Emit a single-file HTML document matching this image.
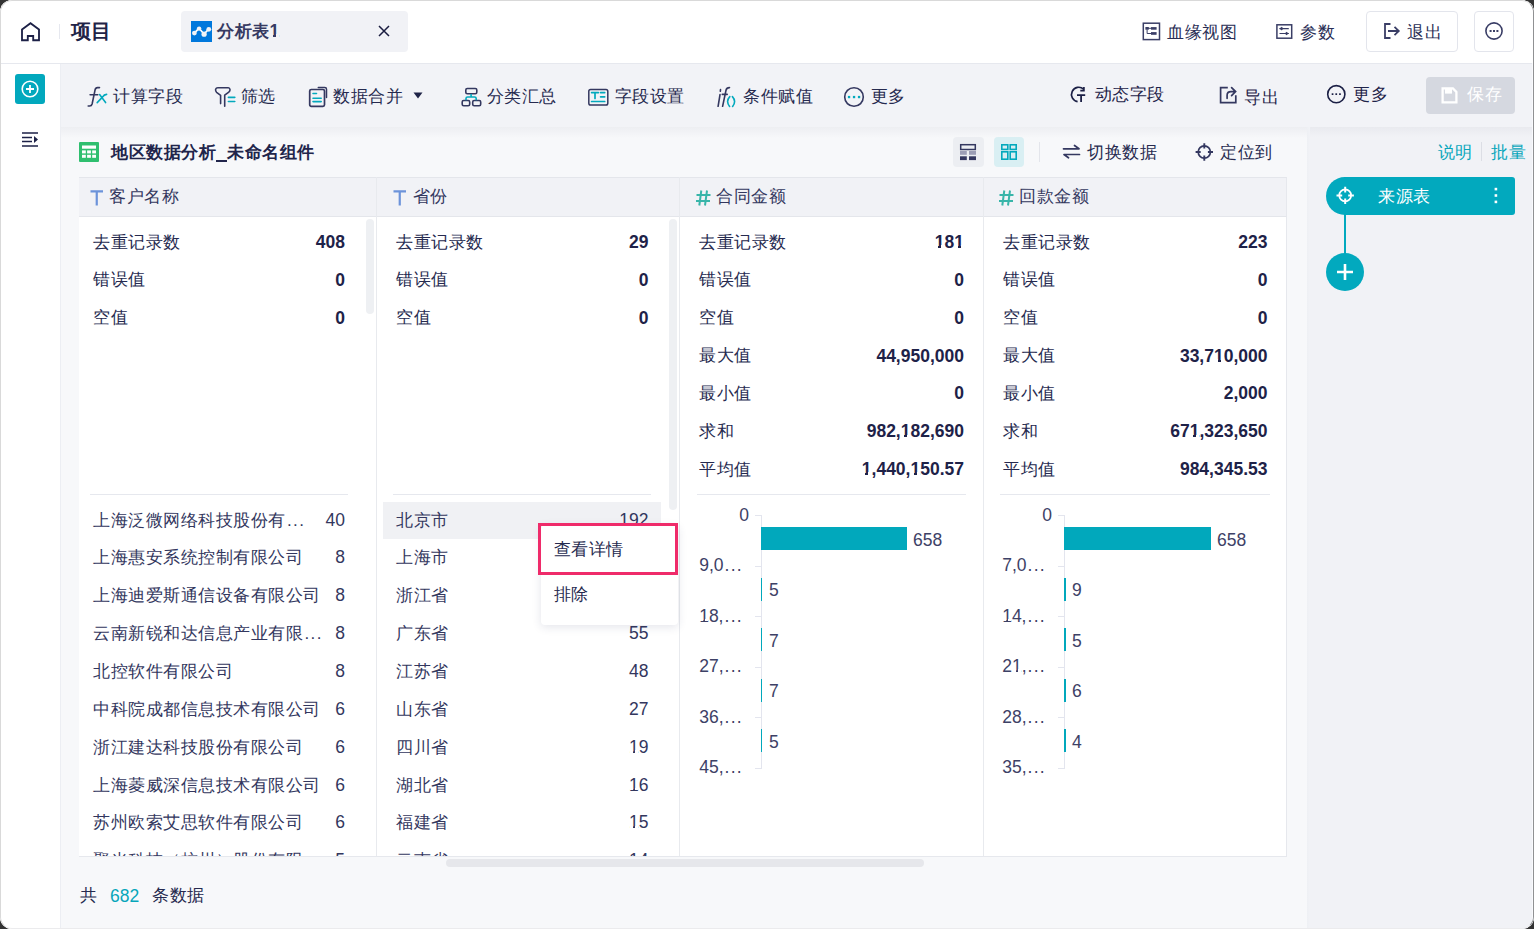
<!DOCTYPE html>
<html><head><meta charset="utf-8">
<style>
*{box-sizing:border-box;margin:0;padding:0}
html,body{width:1534px;height:929px;overflow:hidden;background:#333}
body{font-family:"Liberation Sans",sans-serif;font-size:17px;letter-spacing:.5px;color:#262a4f;position:relative}
.n{font-size:17.5px;letter-spacing:0}
.one{position:relative}
.one::before,.one::after{content:"";position:absolute;top:13.4px;height:2.6px;background:#fff}
.one::before{left:.5px;width:3.2px}
.one::after{left:6px;width:3.2px}
.b .one::after{left:6.6px}
.sm .one::before,.sm .one::after{top:12.9px}
.tab .one::before,.tab .one::after{background:#f1f2f6}
.win{position:absolute;left:0;top:0;width:1534px;height:929px;border-radius:12px;overflow:hidden;background:#fff}
.frame{position:absolute;left:0;top:0;width:1534px;height:929px;border-radius:12px;
 border-left:1px solid #d9d9d9;border-top:1px solid #d9d9d9;border-right:1px solid #909193;border-bottom:1px solid #ebebed}
.a{position:absolute}
.t{position:absolute;white-space:nowrap;line-height:20px}
.b{font-weight:bold}
.r{text-align:right}
svg{position:absolute;overflow:visible}
</style></head><body>
<div class="win">
 <!-- header -->
 <div class="a" style="left:0;top:0;width:1534px;height:64px;background:#fff;border-bottom:1px solid #e6e8ee"></div>
 <svg style="left:21px;top:22px" width="20" height="20" viewBox="0 0 20 20"><path d="M1 7.5 L9.5 1.2 L18 7.5 V18.2 H12.2 V14 H6.8 V18.2 H1 Z" fill="none" stroke="#1d2147" stroke-width="1.85" stroke-linejoin="miter"/></svg>
 <div class="a" style="left:59px;top:24px;width:1px;height:15px;background:#e6e8ef"></div>
 <div class="t b" style="left:71px;top:21px;font-size:20px;letter-spacing:-.5px;color:#1f2347">项目</div>
 <div class="a" style="left:181px;top:11px;width:227px;height:41px;background:#f1f2f6;border-radius:4px"></div>
 <div class="a" style="left:191px;top:21px;width:21px;height:21px;background:#0078dc"></div>
 <svg style="left:191px;top:21px" width="21" height="21" viewBox="0 0 21 21"><path d="M3.3 12.1 L8 7.3 L13 13 L17.7 8.2" fill="none" stroke="#fff" stroke-width="1.7"/><g fill="#f1f3f6"><circle cx="3.4" cy="12.1" r="2.4"/><circle cx="8.1" cy="7.6" r="2.2"/><circle cx="13.1" cy="13.2" r="2.6"/><circle cx="17.8" cy="8.3" r="2.4"/></g></svg>
 <div class="t b tab" style="left:217px;top:21px;color:#363a62">分析表<span class="n one">1</span></div>
 <svg style="left:378px;top:25px" width="12" height="12" viewBox="0 0 12 12"><path d="M1 1 L11 11 M11 1 L1 11" stroke="#1a1d40" stroke-width="1.5"/></svg>

 <svg style="left:1142px;top:22px" width="18" height="18" viewBox="0 0 18 18"><rect x="1.3" y="1.2" width="16.2" height="16.4" fill="none" stroke="#3a3e66" stroke-width="1.5"/><g fill="#3a3e66"><rect x="3.4" y="5" width="3.4" height="2.7"/><rect x="9" y="5.1" width="5.6" height="2.6"/><rect x="9" y="10.1" width="5.6" height="2.7"/></g><path d="M6 6.3 H9 M5.1 7.5 V11.5 H9" fill="none" stroke="#3a3e66" stroke-width="1"/></svg>
 <div class="t" style="left:1167px;top:23px;color:#2a2e55">血缘视图</div>
 <svg style="left:1276px;top:24px" width="16" height="15" viewBox="0 0 16 15"><rect x="0.9" y="0.8" width="14.8" height="13.4" fill="none" stroke="#3a3e66" stroke-width="1.5"/><path d="M3.5 4.6 H12.8 M3.5 9.5 H12.8" stroke="#3a3e66" stroke-width="1.1"/><path d="M3.3 4.6 L5.9 2.8 L7.2 4.6 L5.9 6.4 Z M12.9 9.5 L10.3 7.7 L9 9.5 L10.3 11.3 Z" fill="#3a3e66"/></svg>
 <div class="t" style="left:1300px;top:23px;color:#2a2e55">参数</div>
 <div class="a" style="left:1366px;top:11px;width:92px;height:41px;border:1px solid #e3e5ec;border-radius:4px;background:#fff"></div>
 <svg style="left:1384px;top:23px" width="16" height="16" viewBox="0 0 16 16"><path d="M6.5 1 H1 V15 H6.5" fill="none" stroke="#3a3e66" stroke-width="1.8"/><path d="M4 8 H14.5 M10.5 3.8 L14.8 8 L10.5 12.2" fill="none" stroke="#3a3e66" stroke-width="1.8"/></svg>
 <div class="t" style="left:1407px;top:23px;color:#2a2e55">退出</div>
 <div class="a" style="left:1474px;top:11px;width:40px;height:41px;border:1px solid #e3e5ec;border-radius:4px;background:#fff"></div>
 <svg style="left:1485px;top:22px" width="18" height="18" viewBox="0 0 18 18"><circle cx="9" cy="9" r="8.1" fill="none" stroke="#3a3e66" stroke-width="1.6"/><rect x="4.6" y="8" width="2" height="2" fill="#3a3e66"/><rect x="8" y="8" width="2" height="2" fill="#3a3e66"/><rect x="11.4" y="8" width="2" height="2" fill="#3a3e66"/></svg>

 <!-- sidebar -->
 <div class="a" style="left:0;top:64px;width:61px;height:865px;background:#fff;border-right:1px solid #eceef3"></div>
 <div class="a" style="left:15px;top:74px;width:30px;height:30px;background:#02a8bd;border-radius:3px"></div>
 <svg style="left:15px;top:74px" width="30" height="30" viewBox="0 0 30 30"><circle cx="15" cy="15" r="7.8" fill="none" stroke="#fff" stroke-width="1.6"/><path d="M15 11 V19 M11 15 H19" stroke="#fff" stroke-width="1.8"/></svg>
 <svg style="left:22px;top:132px" width="16" height="15" viewBox="0 0 16 15"><path d="M0 1 H16 M0 5.5 H10 M0 9.5 H10 M0 14 H16" stroke="#1d2147" stroke-width="1.6"/><path d="M12 4 L16 7.5 L12 11 Z" fill="#1d2147"/></svg>

 <!-- toolbar -->
 <div class="a" style="left:61px;top:64px;width:1473px;height:63px;background:#f2f3f7"></div>
 <!-- content bg -->
 <div class="a" style="left:61px;top:127px;width:1246px;height:802px;background:#f7f8fa"></div>
 <div class="a" style="left:61px;top:127px;width:1246px;height:11px;background:linear-gradient(#edeef2,#f7f8fa)"></div>
 <!-- right panel -->
 <div class="a" style="left:1307px;top:127px;width:227px;height:802px;background:#f1f2f6"></div>
 <div class="a" style="left:1307px;top:127px;width:227px;height:10px;background:linear-gradient(#e9eaef,#f1f2f6)"></div>
 <div class="a" style="left:1307px;top:127px;width:3px;height:802px;background:linear-gradient(90deg,#eef0f4,#f1f2f6)"></div>


 <!-- toolbar items -->
 <svg style="left:84px;top:82px" width="28" height="28" viewBox="0 0 28 28"><path d="M15.5 5.6 H13.5 Q11.6 5.6 11.1 7.8 L8.1 22 Q7.6 24 5.6 24 H4.2 M6.1 12.8 H13.8" fill="none" stroke="#343860" stroke-width="1.6" stroke-linecap="round"/><path d="M15.6 12.6 L21.6 20.6 M22.6 12.4 Q20.2 12.4 18.2 15.4 L13.2 20.6" fill="none" stroke="#03a9bd" stroke-width="1.6" stroke-linecap="round"/></svg>
 <div class="t" style="left:113px;top:87px">计算字段</div>
 <svg style="left:210px;top:82px" width="28" height="28" viewBox="0 0 28 28"><path d="M10.6 21.6 V13.3 L6.6 10.3 Q5.4 9.3 5.6 7.3 Q6.2 5.7 7.8 5.7 H18.3 Q19.8 5.7 20 7.5 Q20.2 9.1 18.8 10.1 L14.7 13.2 V24.2" fill="none" stroke="#343860" stroke-width="1.6" stroke-linecap="round" stroke-linejoin="round"/><path d="M18.4 15.4 H24.8 M18.4 19.5 H24.8" stroke="#03a9bd" stroke-width="1.6" stroke-linecap="round"/></svg>
 <div class="t" style="left:240.5px;top:87px">筛选</div>
 <svg style="left:305px;top:82px" width="28" height="28" viewBox="0 0 28 28"><rect x="4.7" y="7.5" width="14.8" height="16.8" rx="1.6" fill="none" stroke="#343860" stroke-width="1.7"/><path d="M13.3 5.5 H19.8 Q21.5 5.5 21.5 7.2 V15.5" fill="none" stroke="#343860" stroke-width="1.5" stroke-linecap="round"/><path d="M8 11.5 H11.5 M8 16.3 H16.2 M8 19.6 H16.2" stroke="#03a9bd" stroke-width="1.6" stroke-linecap="round"/></svg>
 <div class="t" style="left:333px;top:87px">数据合并</div>
 <svg style="left:413px;top:92px" width="10" height="7" viewBox="0 0 10 7"><path d="M0.5 0.5 H9.5 L5 6.5 Z" fill="#1f2347"/></svg>
 <svg style="left:457px;top:82px" width="28" height="28" viewBox="0 0 28 28"><rect x="8.8" y="6.5" width="11" height="5.2" rx="1.5" fill="none" stroke="#343860" stroke-width="1.6"/><rect x="5.2" y="18.5" width="7.5" height="5.2" rx="1.5" fill="none" stroke="#343860" stroke-width="1.6"/><rect x="15.7" y="18.5" width="8" height="5.2" rx="1.5" fill="none" stroke="#343860" stroke-width="1.6"/><path d="M14.1 12 V15 M9 18.3 V16.6 Q9 15 10.6 15 H17.6 Q19.2 15 19.2 16.6 V18.3" fill="none" stroke="#03a9bd" stroke-width="1.6"/></svg>
 <div class="t" style="left:486.5px;top:87px">分类汇总</div>
 <svg style="left:584px;top:82px" width="28" height="28" viewBox="0 0 28 28"><rect x="4.8" y="7.4" width="19" height="15.6" rx="1.8" fill="none" stroke="#343860" stroke-width="1.5"/><path d="M7.6 10.6 H14.4 M11 10.6 V16.4 M16.6 10.6 H20.7 M16.6 14.8 H20.7 M7.6 19.5 H20.7" fill="none" stroke="#03a9bd" stroke-width="1.7" stroke-linecap="round"/></svg>
 <div class="t" style="left:614.5px;top:87px">字段设置</div>
 <svg style="left:712px;top:82px" width="28" height="28" viewBox="0 0 28 28"><path d="M8.5 7.6 L8.3 9.3 M8 12.6 L6.1 24.3 M17.5 5.6 Q14.6 5.6 14 8.2 L10.6 24.3 M10.3 12.4 H15.2" fill="none" stroke="#343860" stroke-width="1.6" stroke-linecap="round"/><path d="M17.8 14.6 Q15.6 17 15.6 19.5 Q15.6 22 17.6 24.4 M20.4 14.6 Q22.6 17 22.6 19.5 Q22.6 22 20.6 24.4" fill="none" stroke="#03a9bd" stroke-width="1.6" stroke-linecap="round"/></svg>
 <div class="t" style="left:743px;top:87px">条件赋值</div>
 <svg style="left:840px;top:82px" width="28" height="28" viewBox="0 0 28 28"><circle cx="14" cy="15" r="9.3" fill="none" stroke="#343860" stroke-width="1.6"/><rect x="7.9" y="13.9" width="2.3" height="2.3" fill="#03a9bd"/><rect x="12.9" y="13.9" width="2.3" height="2.3" fill="#03a9bd"/><rect x="17.9" y="13.9" width="2.3" height="2.3" fill="#03a9bd"/></svg>
 <div class="t" style="left:870.5px;top:87px">更多</div>

 <svg style="left:1064px;top:80px" width="28" height="28" viewBox="0 0 28 28"><path d="M13.6 21.6 A7.2 7.2 0 1 1 19.6 9.2" fill="none" stroke="#1b1f45" stroke-width="1.7"/><path d="M16.3 10.6 H19.9 V7" fill="none" stroke="#1b1f45" stroke-width="1.7"/><path d="M13 15.1 H21.2 M17.1 15.1 V22" fill="none" stroke="#1b1f45" stroke-width="1.8"/></svg>
 <div class="t" style="left:1094.5px;top:85px;color:#1f2349">动态字段</div>
 <svg style="left:1214px;top:80px" width="28" height="28" viewBox="0 0 28 28"><path d="M13.8 7.7 H6.6 V22.6 H21.8 V15.3" fill="none" stroke="#343860" stroke-width="1.7"/><path d="M13.1 18.3 V15.2 Q13.1 11.6 17 11.6 H21 M17.6 7.6 L21.6 11.6 L17.6 15.6" fill="none" stroke="#343860" stroke-width="1.7" stroke-linecap="round"/></svg>
 <div class="t" style="left:1244px;top:87.5px;color:#1f2349">导出</div>
 <svg style="left:1322px;top:80px" width="28" height="28" viewBox="0 0 28 28"><circle cx="14.3" cy="14.2" r="8.6" fill="none" stroke="#1b1f45" stroke-width="1.6"/><rect x="9.7" y="13.3" width="1.7" height="1.7" fill="#1b1f45"/><rect x="13.4" y="13.3" width="1.7" height="1.7" fill="#1b1f45"/><rect x="17.1" y="13.3" width="1.7" height="1.7" fill="#1b1f45"/></svg>
 <div class="t" style="left:1353px;top:85px;color:#1f2349">更多</div>
 <div class="a" style="left:1426px;top:77px;width:89px;height:37px;background:#d5d8e0;border-radius:4px"></div>
 <svg style="left:1432px;top:80px" width="30" height="30" viewBox="0 0 30 30"><path d="M10.6 8.4 H20.9 L24.4 12 V22.4 H10.6 Z" fill="none" stroke="#fff" stroke-width="2.3"/><rect x="13" y="9" width="7" height="4.6" fill="#fff"/></svg>
 <div class="t" style="left:1467px;top:85px;color:#fff">保存</div>

 <div id="content">
 <div class="a" style="left:79px;top:142px;width:20px;height:20px;background:#2fbf6f;border-radius:1px"></div>
 <svg style="left:79px;top:142px" width="20" height="20" viewBox="0 0 20 20"><rect x="3" y="3.5" width="14" height="3.2" fill="#fff"/><g fill="#fff"><rect x="3" y="8.4" width="3.8" height="3"/><rect x="8.1" y="8.4" width="3.8" height="3"/><rect x="13.2" y="8.4" width="3.8" height="3"/><rect x="3" y="12.8" width="3.8" height="3"/><rect x="8.1" y="12.8" width="3.8" height="3"/><rect x="13.2" y="12.8" width="3.8" height="3"/></g></svg>
 <div class="t b" style="left:111px;top:143px;color:#21254b">地区数据分析<span style="display:inline-block;width:11px;height:20px;position:relative;vertical-align:top"><i style="position:absolute;left:-0.5px;top:17px;width:11px;height:2px;background:#21254b"></i></span>未命名组件</div>
 <div class="a" style="left:953px;top:137px;width:31px;height:30px;background:#eceef2;border-radius:4px"></div>
 <svg style="left:953px;top:137px" width="31" height="30" viewBox="0 0 31 30"><rect x="7.7" y="7.7" width="14.6" height="4.8" fill="none" stroke="#343860" stroke-width="1.5"/><rect x="7" y="14" width="6.8" height="3.8" fill="#9c9eb6"/><rect x="16" y="14" width="7" height="3.8" fill="#9c9eb6"/><rect x="7" y="19.3" width="6.8" height="3.8" fill="#343860"/><rect x="16" y="19.3" width="7" height="3.8" fill="#343860"/></svg>
 <div class="a" style="left:994px;top:137px;width:30px;height:30px;background:#d9eff3;border-radius:4px"></div>
 <svg style="left:994px;top:137px" width="30" height="30" viewBox="0 0 30 30"><g fill="none" stroke="#03a9bd" stroke-width="1.6"><rect x="7.8" y="7.8" width="6" height="4.6"/><rect x="16.2" y="7.8" width="6" height="4.6"/><rect x="7.8" y="14.8" width="6" height="7.4"/><rect x="16.2" y="14.8" width="6" height="7.4"/></g></svg>
 <div class="a" style="left:1039px;top:142px;width:1px;height:20px;background:#e3e5eb"></div>
 <svg style="left:1060px;top:140px" width="24" height="24" viewBox="0 0 24 24"><path d="M3.5 8.8 H19 L14.5 5.5 M19.5 14.5 H4 L8.5 17.8" fill="none" stroke="#343860" stroke-width="1.7" stroke-linecap="round" stroke-linejoin="round"/></svg>
 <div class="t" style="left:1087px;top:143px">切换数据</div>
 <svg style="left:1192px;top:140px" width="24" height="24" viewBox="0 0 24 24"><circle cx="12.3" cy="12" r="6.1" fill="none" stroke="#343860" stroke-width="1.7"/><path d="M12.3 3.2 V8.4 M12.3 15.6 V20.8 M3.6 12 H8.7 M15.9 12 H21" stroke="#343860" stroke-width="1.9"/></svg>
 <div class="t" style="left:1220px;top:143px">定位到</div>
 <div class="a" style="left:79px;top:177px;width:1208px;height:680px;background:#fff;border-right:1px solid #e6e8ed;border-bottom:1px solid #e6e8ed"></div>
 <div class="a" style="left:79px;top:177px;width:1208px;height:40px;background:#f1f2f6;border-top:1px solid #e4e6eb;border-bottom:1px solid #e4e6eb;border-right:1px solid #e6e8ed"></div>
 <div class="a" style="left:376px;top:177px;width:1px;height:679px;background:#e8eaee"></div>
 <div class="a" style="left:679px;top:177px;width:1px;height:679px;background:#e8eaee"></div>
 <div class="a" style="left:983px;top:177px;width:1px;height:679px;background:#e8eaee"></div>
 <svg style="left:90px;top:190px" width="14" height="16" viewBox="0 0 14 16"><path d="M0.5 1.3 H13 M6.75 1.3 V15.5" stroke="#6c93da" stroke-width="2.2"/></svg>
 <div class="t" style="left:109px;top:187px;color:#33375e">客户名称</div>
 <svg style="left:393px;top:190px" width="14" height="16" viewBox="0 0 14 16"><path d="M0.5 1.3 H13 M6.75 1.3 V15.5" stroke="#6c93da" stroke-width="2.2"/></svg>
 <div class="t" style="left:412.5px;top:187px;color:#33375e">省份</div>
 <svg style="left:696px;top:190px" width="15" height="16" viewBox="0 0 15 16"><path d="M5.3 0.5 L3.3 15.5 M11 0.5 L9 15.5 M0.5 5 H14.5 M0 11 H14" stroke="#38b5a9" stroke-width="2"/></svg>
 <div class="t" style="left:716px;top:187px;color:#33375e">合同金额</div>
 <svg style="left:999px;top:190px" width="15" height="16" viewBox="0 0 15 16"><path d="M5.3 0.5 L3.3 15.5 M11 0.5 L9 15.5 M0.5 5 H14.5 M0 11 H14" stroke="#38b5a9" stroke-width="2"/></svg>
 <div class="t" style="left:1019px;top:187px;color:#33375e">回款金额</div>
 <div class="t" style="left:93px;top:232.5px">去重记录数</div>
 <div class="t b n r" style="left:195px;width:150px;top:232.0px;color:#1e2248">408</div>
 <div class="t" style="left:93px;top:270.4px">错误值</div>
 <div class="t b n r" style="left:195px;width:150px;top:269.9px;color:#1e2248">0</div>
 <div class="t" style="left:93px;top:308.2px">空值</div>
 <div class="t b n r" style="left:195px;width:150px;top:307.7px;color:#1e2248">0</div>
 <div class="t" style="left:396px;top:232.5px">去重记录数</div>
 <div class="t b n r" style="left:498.5px;width:150px;top:232.0px;color:#1e2248">29</div>
 <div class="t" style="left:396px;top:270.4px">错误值</div>
 <div class="t b n r" style="left:498.5px;width:150px;top:269.9px;color:#1e2248">0</div>
 <div class="t" style="left:396px;top:308.2px">空值</div>
 <div class="t b n r" style="left:498.5px;width:150px;top:307.7px;color:#1e2248">0</div>
 <div class="t" style="left:699px;top:232.5px">去重记录数</div>
 <div class="t b n r" style="left:814px;width:150px;top:232.0px;color:#1e2248"><span class="one">1</span>8<span class="one">1</span></div>
 <div class="t" style="left:699px;top:270.4px">错误值</div>
 <div class="t b n r" style="left:814px;width:150px;top:269.9px;color:#1e2248">0</div>
 <div class="t" style="left:699px;top:308.2px">空值</div>
 <div class="t b n r" style="left:814px;width:150px;top:307.7px;color:#1e2248">0</div>
 <div class="t" style="left:699px;top:346.1px">最大值</div>
 <div class="t b n r" style="left:814px;width:150px;top:345.6px;color:#1e2248">44,950,000</div>
 <div class="t" style="left:699px;top:383.9px">最小值</div>
 <div class="t b n r" style="left:814px;width:150px;top:383.4px;color:#1e2248">0</div>
 <div class="t" style="left:699px;top:421.8px">求和</div>
 <div class="t b n r" style="left:814px;width:150px;top:421.2px;color:#1e2248">982,<span class="one">1</span>82,690</div>
 <div class="t" style="left:699px;top:459.6px">平均值</div>
 <div class="t b n r" style="left:814px;width:150px;top:459.1px;color:#1e2248"><span class="one">1</span>,440,<span class="one">1</span>50.57</div>
 <div class="t" style="left:1003px;top:232.5px">去重记录数</div>
 <div class="t b n r" style="left:1117.5px;width:150px;top:232.0px;color:#1e2248">223</div>
 <div class="t" style="left:1003px;top:270.4px">错误值</div>
 <div class="t b n r" style="left:1117.5px;width:150px;top:269.9px;color:#1e2248">0</div>
 <div class="t" style="left:1003px;top:308.2px">空值</div>
 <div class="t b n r" style="left:1117.5px;width:150px;top:307.7px;color:#1e2248">0</div>
 <div class="t" style="left:1003px;top:346.1px">最大值</div>
 <div class="t b n r" style="left:1117.5px;width:150px;top:345.6px;color:#1e2248">33,7<span class="one">1</span>0,000</div>
 <div class="t" style="left:1003px;top:383.9px">最小值</div>
 <div class="t b n r" style="left:1117.5px;width:150px;top:383.4px;color:#1e2248">2,000</div>
 <div class="t" style="left:1003px;top:421.8px">求和</div>
 <div class="t b n r" style="left:1117.5px;width:150px;top:421.2px;color:#1e2248">67<span class="one">1</span>,323,650</div>
 <div class="t" style="left:1003px;top:459.6px">平均值</div>
 <div class="t b n r" style="left:1117.5px;width:150px;top:459.1px;color:#1e2248">984,345.53</div>
 <div class="a" style="left:366px;top:219px;width:8px;height:95px;background:#eef0f3;border-radius:4px"></div>
 <div class="a" style="left:669px;top:219px;width:8px;height:291px;background:#eef0f3;border-radius:4px"></div>
 <div class="a" style="left:90px;top:494px;width:258px;height:1px;background:#e6e8ee"></div>
 <div class="a" style="left:393px;top:494px;width:258px;height:1px;background:#e6e8ee"></div>
 <div class="a" style="left:697px;top:494px;width:269px;height:1px;background:#e6e8ee"></div>
 <div class="a" style="left:1000px;top:494px;width:270px;height:1px;background:#e6e8ee"></div>
 <div class="a" style="left:383px;top:502px;width:278px;height:37px;background:#f0f1f4"></div>
 <div class="a" style="left:79px;top:502px;width:1208px;height:354px;overflow:hidden">
 <div class="t" style="left:14px;top:8.5px;color:#33375e">上海泛微网络科技股份有<span style="letter-spacing:1.35px;margin-left:1.5px">...</span></div>
 <div class="t n r" style="left:206px;width:60px;top:7.5px;color:#33375e">40</div>
 <div class="t" style="left:14px;top:46.4px;color:#33375e">上海惠安系统控制有限公司</div>
 <div class="t n r" style="left:206px;width:60px;top:45.4px;color:#33375e">8</div>
 <div class="t" style="left:14px;top:84.2px;color:#33375e">上海迪爱斯通信设备有限公司</div>
 <div class="t n r" style="left:206px;width:60px;top:83.2px;color:#33375e">8</div>
 <div class="t" style="left:14px;top:122.0px;color:#33375e">云南新锐和达信息产业有限<span style="letter-spacing:1.35px;margin-left:1.5px">...</span></div>
 <div class="t n r" style="left:206px;width:60px;top:121.0px;color:#33375e">8</div>
 <div class="t" style="left:14px;top:159.9px;color:#33375e">北控软件有限公司</div>
 <div class="t n r" style="left:206px;width:60px;top:158.9px;color:#33375e">8</div>
 <div class="t" style="left:14px;top:197.8px;color:#33375e">中科院成都信息技术有限公司</div>
 <div class="t n r" style="left:206px;width:60px;top:196.8px;color:#33375e">6</div>
 <div class="t" style="left:14px;top:235.6px;color:#33375e">浙江建达科技股份有限公司</div>
 <div class="t n r" style="left:206px;width:60px;top:234.6px;color:#33375e">6</div>
 <div class="t" style="left:14px;top:273.5px;color:#33375e">上海菱威深信息技术有限公司</div>
 <div class="t n r" style="left:206px;width:60px;top:272.5px;color:#33375e">6</div>
 <div class="t" style="left:14px;top:311.3px;color:#33375e">苏州欧索艾思软件有限公司</div>
 <div class="t n r" style="left:206px;width:60px;top:310.3px;color:#33375e">6</div>
 <div class="t" style="left:14px;top:349.2px;color:#33375e">聚光科技（杭州）股份有限<span style="letter-spacing:1.35px;margin-left:1.5px">...</span></div>
 <div class="t n r" style="left:206px;width:60px;top:348.2px;color:#33375e">5</div>
 <div class="t" style="left:317px;top:8.5px;color:#33375e">北京市</div>
 <div class="t n r" style="left:509.5px;width:60px;top:7.5px;color:#33375e"><span class="one">1</span>92</div>
 <div class="t" style="left:317px;top:46.4px;color:#33375e">上海市</div>
 <div class="t n r" style="left:509.5px;width:60px;top:45.4px;color:#33375e">77</div>
 <div class="t" style="left:317px;top:84.2px;color:#33375e">浙江省</div>
 <div class="t n r" style="left:509.5px;width:60px;top:83.2px;color:#33375e">60</div>
 <div class="t" style="left:317px;top:122.0px;color:#33375e">广东省</div>
 <div class="t n r" style="left:509.5px;width:60px;top:121.0px;color:#33375e">55</div>
 <div class="t" style="left:317px;top:159.9px;color:#33375e">江苏省</div>
 <div class="t n r" style="left:509.5px;width:60px;top:158.9px;color:#33375e">48</div>
 <div class="t" style="left:317px;top:197.8px;color:#33375e">山东省</div>
 <div class="t n r" style="left:509.5px;width:60px;top:196.8px;color:#33375e">27</div>
 <div class="t" style="left:317px;top:235.6px;color:#33375e">四川省</div>
 <div class="t n r" style="left:509.5px;width:60px;top:234.6px;color:#33375e"><span class="one">1</span>9</div>
 <div class="t" style="left:317px;top:273.5px;color:#33375e">湖北省</div>
 <div class="t n r" style="left:509.5px;width:60px;top:272.5px;color:#33375e"><span class="one">1</span>6</div>
 <div class="t" style="left:317px;top:311.3px;color:#33375e">福建省</div>
 <div class="t n r" style="left:509.5px;width:60px;top:310.3px;color:#33375e"><span class="one">1</span>5</div>
 <div class="t" style="left:317px;top:349.2px;color:#33375e">云南省</div>
 <div class="t n r" style="left:509.5px;width:60px;top:348.2px;color:#33375e"><span class="one">1</span>4</div>
 </div>
 <div class="a" style="left:761px;top:515px;width:1px;height:254px;background:#e3e5ee"></div>
 <div class="a" style="left:755px;top:515.0px;width:6px;height:1px;background:#e3e5ee"></div>
 <div class="t n r" style="left:669px;width:80px;top:504.5px;color:#3d4166">0</div>
 <div class="a" style="left:755px;top:565.5px;width:6px;height:1px;background:#e3e5ee"></div>
 <div class="t n r" style="left:663px;width:80px;top:555.0px;color:#3d4166">9,0<span style="letter-spacing:1.3px;margin-left:1px">...</span></div>
 <div class="a" style="left:755px;top:616.0px;width:6px;height:1px;background:#e3e5ee"></div>
 <div class="t n r" style="left:663px;width:80px;top:605.5px;color:#3d4166"><span class="one">1</span>8,<span style="letter-spacing:1.3px;margin-left:1px">...</span></div>
 <div class="a" style="left:755px;top:666.5px;width:6px;height:1px;background:#e3e5ee"></div>
 <div class="t n r" style="left:663px;width:80px;top:656.0px;color:#3d4166">27,<span style="letter-spacing:1.3px;margin-left:1px">...</span></div>
 <div class="a" style="left:755px;top:717.0px;width:6px;height:1px;background:#e3e5ee"></div>
 <div class="t n r" style="left:663px;width:80px;top:706.5px;color:#3d4166">36,<span style="letter-spacing:1.3px;margin-left:1px">...</span></div>
 <div class="a" style="left:755px;top:767.5px;width:6px;height:1px;background:#e3e5ee"></div>
 <div class="t n r" style="left:663px;width:80px;top:757.0px;color:#3d4166">45,<span style="letter-spacing:1.3px;margin-left:1px">...</span></div>
 <div class="a" style="left:761px;top:527.0px;width:146px;height:23px;background:#01a8bc"></div>
 <div class="t n" style="left:913px;top:529.5px;color:#3d4166">658</div>
 <div class="a" style="left:761px;top:577.5px;width:1px;height:23px;background:#01a8bc"></div>
 <div class="t n" style="left:769px;top:580.0px;color:#3d4166">5</div>
 <div class="a" style="left:761px;top:628.0px;width:1px;height:23px;background:#01a8bc"></div>
 <div class="t n" style="left:769px;top:630.5px;color:#3d4166">7</div>
 <div class="a" style="left:761px;top:678.5px;width:1px;height:23px;background:#01a8bc"></div>
 <div class="t n" style="left:769px;top:681.0px;color:#3d4166">7</div>
 <div class="a" style="left:761px;top:729.0px;width:1px;height:23px;background:#01a8bc"></div>
 <div class="t n" style="left:769px;top:731.5px;color:#3d4166">5</div>
 <div class="a" style="left:1064px;top:515px;width:1px;height:254px;background:#e3e5ee"></div>
 <div class="a" style="left:1058px;top:515.0px;width:6px;height:1px;background:#e3e5ee"></div>
 <div class="t n r" style="left:972px;width:80px;top:504.5px;color:#3d4166">0</div>
 <div class="a" style="left:1058px;top:565.5px;width:6px;height:1px;background:#e3e5ee"></div>
 <div class="t n r" style="left:966px;width:80px;top:555.0px;color:#3d4166">7,0<span style="letter-spacing:1.3px;margin-left:1px">...</span></div>
 <div class="a" style="left:1058px;top:616.0px;width:6px;height:1px;background:#e3e5ee"></div>
 <div class="t n r" style="left:966px;width:80px;top:605.5px;color:#3d4166"><span class="one">1</span>4,<span style="letter-spacing:1.3px;margin-left:1px">...</span></div>
 <div class="a" style="left:1058px;top:666.5px;width:6px;height:1px;background:#e3e5ee"></div>
 <div class="t n r" style="left:966px;width:80px;top:656.0px;color:#3d4166">2<span class="one">1</span>,<span style="letter-spacing:1.3px;margin-left:1px">...</span></div>
 <div class="a" style="left:1058px;top:717.0px;width:6px;height:1px;background:#e3e5ee"></div>
 <div class="t n r" style="left:966px;width:80px;top:706.5px;color:#3d4166">28,<span style="letter-spacing:1.3px;margin-left:1px">...</span></div>
 <div class="a" style="left:1058px;top:767.5px;width:6px;height:1px;background:#e3e5ee"></div>
 <div class="t n r" style="left:966px;width:80px;top:757.0px;color:#3d4166">35,<span style="letter-spacing:1.3px;margin-left:1px">...</span></div>
 <div class="a" style="left:1064px;top:527.0px;width:147px;height:23px;background:#01a8bc"></div>
 <div class="t n" style="left:1217px;top:529.5px;color:#3d4166">658</div>
 <div class="a" style="left:1064px;top:577.5px;width:2px;height:23px;background:#01a8bc"></div>
 <div class="t n" style="left:1072px;top:580.0px;color:#3d4166">9</div>
 <div class="a" style="left:1064px;top:628.0px;width:2px;height:23px;background:#01a8bc"></div>
 <div class="t n" style="left:1072px;top:630.5px;color:#3d4166">5</div>
 <div class="a" style="left:1064px;top:678.5px;width:2px;height:23px;background:#01a8bc"></div>
 <div class="t n" style="left:1072px;top:681.0px;color:#3d4166">6</div>
 <div class="a" style="left:1064px;top:729.0px;width:2px;height:23px;background:#01a8bc"></div>
 <div class="t n" style="left:1072px;top:731.5px;color:#3d4166">4</div>
 <div class="a" style="left:541px;top:525px;width:137px;height:100px;background:#fff;border-radius:4px;box-shadow:0 2px 10px rgba(40,50,90,.13)"></div>
 <div class="a" style="left:538px;top:523px;width:140px;height:52px;border:3px solid #ef2b6a"></div>
 <div class="t" style="left:553.5px;top:540px">查看详情</div>
 <div class="t" style="left:553.5px;top:585px">排除</div>
 <div class="a" style="left:446px;top:859px;width:478px;height:8px;background:#e6e7eb;border-radius:4px"></div>
 <div class="t" style="left:79.5px;top:886px">共</div>
 <div class="t n" style="left:110px;top:886px;color:#06a6ba">682</div>
 <div class="t" style="left:152px;top:886px">条数据</div>
 <div class="t" style="left:1437.5px;top:143px;color:#07a6bb">说明</div>
 <div class="a" style="left:1481px;top:142px;width:1px;height:19px;background:#dcdee5"></div>
 <div class="t" style="left:1491px;top:143px;color:#07a6bb">批量</div>
 <div class="a" style="left:1344px;top:214px;width:2px;height:42px;background:#02a9be"></div>
 <div class="a" style="left:1326px;top:177px;width:189px;height:38px;background:#02a9be;border-radius:19px 3px 3px 19px"></div>
 <svg style="left:1333px;top:183px" width="24" height="24" viewBox="0 0 24 24"><circle cx="12.2" cy="12.4" r="5.9" fill="none" stroke="#fff" stroke-width="1.8"/><path d="M12.2 3.8 V9.4 M12.2 15.4 V21 M3.5 12.4 H9.2 M15.2 12.4 H20.9" stroke="#fff" stroke-width="2"/></svg>
 <div class="t" style="left:1378px;top:186.5px;color:#fff">来源表</div>
 <svg style="left:1494px;top:187px" width="5" height="17" viewBox="0 0 5 17"><rect x="0.6" y="0.8" width="2.6" height="2.6" fill="#fff"/><rect x="0.6" y="7.2" width="2.6" height="2.6" fill="#fff"/><rect x="0.6" y="13.6" width="2.6" height="2.6" fill="#fff"/></svg>
 <div class="a" style="left:1326px;top:253px;width:38px;height:38px;background:#02a9be;border-radius:50%"></div>
 <svg style="left:1326px;top:253px" width="38" height="38" viewBox="0 0 38 38"><path d="M19 11 V27 M11 19 H27" stroke="#fff" stroke-width="2.6"/></svg>
 </div>
 <div id="rp"></div>
 <div class="a" style="left:1532px;top:63px;width:1px;height:866px;background:#f9fafd"></div>
 <div class="frame"></div>
</div>
</body></html>
